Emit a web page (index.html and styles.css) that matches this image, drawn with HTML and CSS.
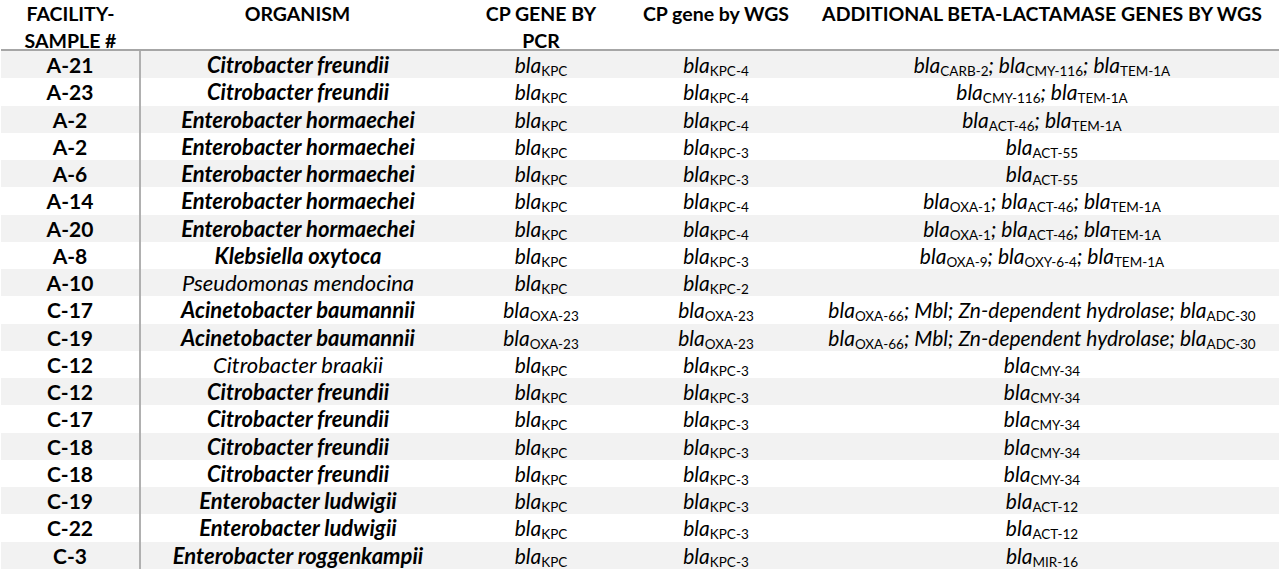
FILE: index.html
```html
<!DOCTYPE html>
<html>
<head>
<meta charset="utf-8">
<link rel="stylesheet" href="styles.css">
</head>
<body>
<table class="tbl">
  <colgroup>
    <col class="c1"><col class="c2"><col class="c3"><col class="c4"><col class="c5">
  </colgroup>
  <thead>
    <tr>
      <th><div class="hd">FACILITY-<br>SAMPLE #</div></th>
      <th><div class="hd">ORGANISM</div></th>
      <th><div class="hd">CP GENE BY<br>PCR</div></th>
      <th><div class="hd">CP gene by WGS</div></th>
      <th><div class="hd">ADDITIONAL BETA-LACTAMASE GENES BY WGS</div></th>
    </tr>
  </thead>
  <tbody>
    <tr><td class="id">A-21</td><td class="org">Citrobacter freundii</td><td><i>bla</i><sub>KPC</sub></td><td><i>bla</i><sub>KPC-4</sub></td><td><i>bla</i><sub>CARB-2</sub><i>; bla</i><sub>CMY-116</sub><i>; bla</i><sub>TEM-1A</sub></td></tr>
    <tr><td class="id">A-23</td><td class="org">Citrobacter freundii</td><td><i>bla</i><sub>KPC</sub></td><td><i>bla</i><sub>KPC-4</sub></td><td><i>bla</i><sub>CMY-116</sub><i>; bla</i><sub>TEM-1A</sub></td></tr>
    <tr><td class="id">A-2</td><td class="org">Enterobacter hormaechei</td><td><i>bla</i><sub>KPC</sub></td><td><i>bla</i><sub>KPC-4</sub></td><td><i>bla</i><sub>ACT-46</sub><i>; bla</i><sub>TEM-1A</sub></td></tr>
    <tr><td class="id">A-2</td><td class="org">Enterobacter hormaechei</td><td><i>bla</i><sub>KPC</sub></td><td><i>bla</i><sub>KPC-3</sub></td><td><i>bla</i><sub>ACT-55</sub></td></tr>
    <tr><td class="id">A-6</td><td class="org">Enterobacter hormaechei</td><td><i>bla</i><sub>KPC</sub></td><td><i>bla</i><sub>KPC-3</sub></td><td><i>bla</i><sub>ACT-55</sub></td></tr>
    <tr><td class="id">A-14</td><td class="org">Enterobacter hormaechei</td><td><i>bla</i><sub>KPC</sub></td><td><i>bla</i><sub>KPC-4</sub></td><td><i>bla</i><sub>OXA-1</sub><i>; bla</i><sub>ACT-46</sub><i>; bla</i><sub>TEM-1A</sub></td></tr>
    <tr><td class="id">A-20</td><td class="org">Enterobacter hormaechei</td><td><i>bla</i><sub>KPC</sub></td><td><i>bla</i><sub>KPC-4</sub></td><td><i>bla</i><sub>OXA-1</sub><i>; bla</i><sub>ACT-46</sub><i>; bla</i><sub>TEM-1A</sub></td></tr>
    <tr><td class="id">A-8</td><td class="org">Klebsiella oxytoca</td><td><i>bla</i><sub>KPC</sub></td><td><i>bla</i><sub>KPC-3</sub></td><td><i>bla</i><sub>OXA-9</sub><i>; bla</i><sub>OXY-6-4</sub><i>; bla</i><sub>TEM-1A</sub></td></tr>
    <tr><td class="id">A-10</td><td class="org plain">Pseudomonas mendocina</td><td><i>bla</i><sub>KPC</sub></td><td><i>bla</i><sub>KPC-2</sub></td><td></td></tr>
    <tr><td class="id">C-17</td><td class="org">Acinetobacter baumannii</td><td><i>bla</i><sub>OXA-23</sub></td><td><i>bla</i><sub>OXA-23</sub></td><td><i>bla</i><sub>OXA-66</sub><i>; Mbl; Zn-dependent hydrolase; bla</i><sub>ADC-30</sub></td></tr>
    <tr><td class="id">C-19</td><td class="org">Acinetobacter baumannii</td><td><i>bla</i><sub>OXA-23</sub></td><td><i>bla</i><sub>OXA-23</sub></td><td><i>bla</i><sub>OXA-66</sub><i>; Mbl; Zn-dependent hydrolase; bla</i><sub>ADC-30</sub></td></tr>
    <tr><td class="id">C-12</td><td class="org plain">Citrobacter braakii</td><td><i>bla</i><sub>KPC</sub></td><td><i>bla</i><sub>KPC-3</sub></td><td><i>bla</i><sub>CMY-34</sub></td></tr>
    <tr><td class="id">C-12</td><td class="org">Citrobacter freundii</td><td><i>bla</i><sub>KPC</sub></td><td><i>bla</i><sub>KPC-3</sub></td><td><i>bla</i><sub>CMY-34</sub></td></tr>
    <tr><td class="id">C-17</td><td class="org">Citrobacter freundii</td><td><i>bla</i><sub>KPC</sub></td><td><i>bla</i><sub>KPC-3</sub></td><td><i>bla</i><sub>CMY-34</sub></td></tr>
    <tr><td class="id">C-18</td><td class="org">Citrobacter freundii</td><td><i>bla</i><sub>KPC</sub></td><td><i>bla</i><sub>KPC-3</sub></td><td><i>bla</i><sub>CMY-34</sub></td></tr>
    <tr><td class="id">C-18</td><td class="org">Citrobacter freundii</td><td><i>bla</i><sub>KPC</sub></td><td><i>bla</i><sub>KPC-3</sub></td><td><i>bla</i><sub>CMY-34</sub></td></tr>
    <tr><td class="id">C-19</td><td class="org">Enterobacter ludwigii</td><td><i>bla</i><sub>KPC</sub></td><td><i>bla</i><sub>KPC-3</sub></td><td><i>bla</i><sub>ACT-12</sub></td></tr>
    <tr><td class="id">C-22</td><td class="org">Enterobacter ludwigii</td><td><i>bla</i><sub>KPC</sub></td><td><i>bla</i><sub>KPC-3</sub></td><td><i>bla</i><sub>ACT-12</sub></td></tr>
    <tr><td class="id">C-3</td><td class="org">Enterobacter roggenkampii</td><td><i>bla</i><sub>KPC</sub></td><td><i>bla</i><sub>KPC-3</sub></td><td><i>bla</i><sub>MIR-16</sub></td></tr>
  </tbody>
</table>
</body>
</html>
```
FILE: styles.css
```css
html, body {
  margin: 0;
  padding: 0;
  background: #ffffff;
}
body {
  font-family: Lato, "Open Sans", "Liberation Sans", sans-serif;
  color: #000;
  overflow: hidden;
}
.tbl {
  border-collapse: collapse;
  table-layout: fixed;
  width: 1278px;
  margin-left: 1px;
}
.c1 { width: 139px; }
.c2 { width: 315px; }
.c3 { width: 172px; }
.c4 { width: 178px; }
.c5 { width: 474px; }

.tbl th {
  font-weight: 700;
  font-size: 19.5px;
  line-height: 27px;
  padding: 0;
  text-align: center;
  vertical-align: top;
  border-bottom: 2px solid #a6a6a6;
  white-space: nowrap;
}
.hd {
  height: 49px;
  overflow: visible;
}
.tbl td {
  height: 27.25px;
  padding: 0;
  font-size: 21px;
  line-height: 27px;
  text-align: center;
  vertical-align: middle;
  white-space: nowrap;
}
.tbl td:first-child {
  border-right: 2px solid #b0b0b0;
}
.tbl tbody tr:nth-child(odd) td {
  background: #f2f2f2;
}
.id {
  font-weight: 700;
}
.org {
  font-weight: 700;
  font-style: italic;
}
.tbl td.org {
  font-size: 22px;
}
.org.plain {
  font-weight: 400;
}
.tbl i {
  font-style: italic;
}
.tbl sub {
  font-size: 13.5px;
  font-style: normal;
  vertical-align: -3px;
  line-height: 0;
}
```
